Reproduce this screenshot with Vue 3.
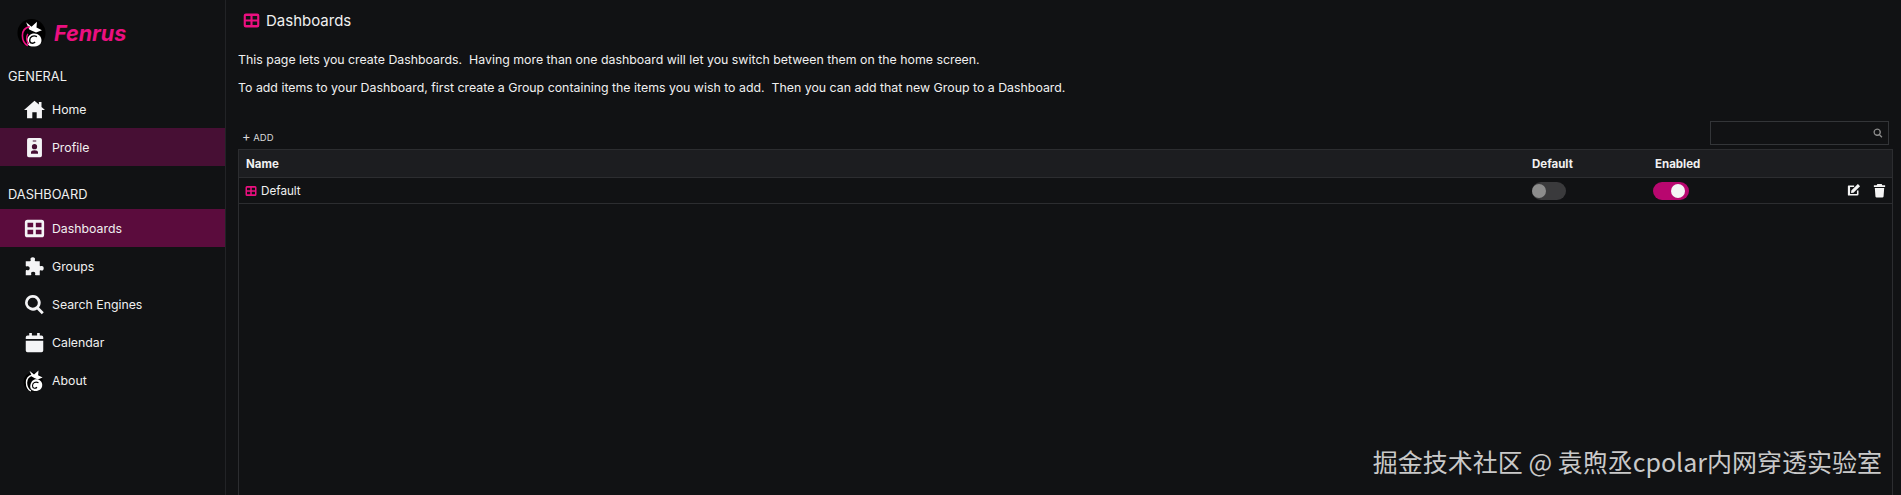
<script setup>
const general = [
  { label: 'Home', icon: 'home' },
  { label: 'Profile', icon: 'profile', state: 'hover' }
]
const dashboard = [
  { label: 'Dashboards', icon: 'grid', state: 'active' },
  { label: 'Groups', icon: 'puzzle' },
  { label: 'Search Engines', icon: 'search' },
  { label: 'Calendar', icon: 'calendar' },
  { label: 'About', icon: 'fox' }
]
const paths = {
  home: 'M12 2 0 12.500h3.500V22h6v-7h5v7h6v-9.500H24l-4-3.500V3.500h-3v2.800z',
  profile: 'M5.500 1h13a2 2 0 0 1 2 2v18a2 2 0 0 1-2 2h-13a2 2 0 0 1-2-2V3a2 2 0 0 1 2-2zM10 4v1h4V4zm2 4a3 3 0 1 0 0 6 3 3 0 0 0 0-6zm-4 11h8v-1.500c0-1.500-1.500-2.500-4-2.500s-4 1-4 2.500z',
  grid: 'M4 2h16a3 3 0 0 1 3 3v14a3 3 0 0 1-3 3H4a3 3 0 0 1-3-3V5a3 3 0 0 1 3-3zm0 3.500V10.500h6.500V5.500zm9.500 0V10.500H20V5.500zM4 13.500v5h6.500v-5zm9.500 0v5H20v-5z',
  puzzle: 'M10 1.500c2 0 3 1.200 2.500 2.800-.3.800-.3 1.700.7 1.700H18v4.800c0 1 .9 1 1.700.7 1.600-.5 2.800.5 2.800 2.500s-1.200 3-2.800 2.500c-.8-.3-1.700-.3-1.700.7V22h-4.500c-1 0-1-.9-.7-1.700.4-1.300-.6-2.300-2.300-2.300s-2.700 1-2.300 2.300c.3.800.3 1.700-.7 1.700H2v-5c0-1 .9-1 1.700-.7 1.400.4 2.800-.5 2.800-2.300s-1.400-2.700-2.800-2.300C2.900 12 2 12 2 11V6h4.800c1 0 1-.9.700-1.700C7 2.700 8 1.500 10 1.500z',
  search: 'M10 1a9 9 0 0 1 7.200 14.400l5.400 5.400-2.300 2.300-5.400-5.400A9 9 0 1 1 10 1zm0 3.200a5.800 5.800 0 1 0 0 11.600 5.800 5.800 0 0 0 0-11.600z',
  calendar: 'M6 1h3v3h6V1h3v3h2a2 2 0 0 1 2 2v2H2V6a2 2 0 0 1 2-2h2zM2 10h20v11a2 2 0 0 1-2 2H4a2 2 0 0 1-2-2z'
}
</script>

<template>
  <div class="page">
    <aside class="sidebar">
      <div class="brand">
        <svg class="brand-fox" viewBox="0 0 32 32">
          <circle cx="16" cy="16" r="15.500" fill="#000" />
          <path d="M10 4l6 5 6-5.500-.5 6.500 6 3-6.500 2.500-4.500-2-3-1.500z" fill="#fff" />
          <path d="M14 9C9 10 6 14 6 19s2 9 6 11" fill="none" stroke="#ec0f80" stroke-width="1.800" />
          <path d="M16 17c6-2 11 2 11 7s-4 7-9 7c-5 0-7-3-7-6s2-7 5-8z" fill="#fff" />
          <path d="M22 20c-4-2-8 0-8 4s4 4 6 2" fill="none" stroke="#000" stroke-width="1.500" />
          <path d="M12 17c-2 3-2 8 1 11" fill="none" stroke="#ec0f80" stroke-width="1.500" />
        </svg>
        <span class="brand-name">Fenrus</span>
      </div>

      <h2 class="section general">GENERAL</h2>
      <a v-for="item in general" :key="item.label" class="nav-item" :class="item.state">
        <span class="nav-icon"><svg viewBox="0 0 24 24"><path fill-rule="evenodd" :d="paths[item.icon]" /></svg></span>
        {{ item.label }}
      </a>

      <h2 class="section board">DASHBOARD</h2>
      <a v-for="item in dashboard" :key="item.label" class="nav-item" :class="item.state">
        <span class="nav-icon">
          <svg v-if="item.icon === 'fox'" class="about-fox" viewBox="0 0 32 32">
            <circle cx="15" cy="18" r="13" fill="#000" />
            <path d="M10 3l6 5 6-5.500-.5 6.500 6 3-6.500 2.500-4.500-2-3-1.500z" fill="#fff" />
            <path d="M14 9C9 10 6 14 6 19s2 9 6 11" fill="none" stroke="#fff" stroke-width="1.800" />
            <path d="M16 15c6-2 11 2 11 7s-4 8-9 8c-5 0-7-3-7-6s2-8 5-9z" fill="#fff" />
            <path d="M22 19c-4-2-8 0-8 4s4 4 6 2" fill="none" stroke="#000" stroke-width="1.500" />
          </svg>
          <svg v-else viewBox="0 0 24 24"><path fill-rule="evenodd" :d="paths[item.icon]" /></svg>
        </span>
        {{ item.label }}
      </a>
    </aside>

    <main class="main">
      <header class="title">
        <svg class="title-icon" viewBox="0 0 24 24"><path fill-rule="evenodd" :d="paths.grid" /></svg>
        <span>Dashboards</span>
      </header>
      <p class="intro first">This page lets you create Dashboards.&nbsp; Having more than one dashboard will let you switch between them on the home screen.</p>
      <p class="intro">To add items to your Dashboard, first create a Group containing the items you wish to add.&nbsp; Then you can add that new Group to a Dashboard.</p>

      <div class="toolbar">
        <button class="add"><span class="plus">+</span> ADD</button>
        <div class="search-box">
          <svg viewBox="0 0 24 24"><path fill-rule="evenodd" :d="paths.search" /></svg>
        </div>
      </div>

      <div class="table">
        <div class="row head">
          <div class="c-name">Name</div>
          <div class="c-default">Default</div>
          <div class="c-enabled">Enabled</div>
          <div class="c-actions"></div>
        </div>
        <div class="row body">
          <div class="c-name name-cell">
            <svg class="row-icon" viewBox="0 0 24 24"><path fill-rule="evenodd" :d="paths.grid" /></svg>
            Default
          </div>
          <div class="c-default"><span class="switch"><span class="knob"></span></span></div>
          <div class="c-enabled"><span class="switch on"><span class="knob"></span></span></div>
          <div class="c-actions">
            <svg viewBox="0 0 24 24"><path d="M4 4h9v2.500H6.500v11h11V12H20v6a2 2 0 0 1-2 2H4a1 1 0 0 1-1-1V5a1 1 0 0 1 1-1z" /><path d="M19 1.500 22.500 5 12 15.500l-4 .5.500-4z" /></svg>
            <svg viewBox="0 0 24 24"><path d="M8.500 1.500h7L16.500 3.500H21v3H3v-3h4.500zM4.500 8h15l-1 13.500a2 2 0 0 1-2 1.500h-9a2 2 0 0 1-2-1.500z" /></svg>
          </div>
        </div>
      </div>

      <div class="watermark">掘金技术社区 @ 袁煦丞cpolar内网穿透实验室</div>
    </main>
  </div>
</template>

<style>
html, body { margin: 0; background: #111214; }
</style>

<style scoped>
.page {
  display: flex;
  height: 495px;
  overflow: hidden;
  background: #111214;
  color: #f0f0f0;
  font-family: Inter, "Noto Sans", sans-serif;
  font-size: 12.300px;
}
.sidebar {
  width: 225px;
  flex: none;
  border-right: 1px solid #222326;
}
.brand {
  display: flex;
  align-items: center;
  gap: 8px;
  height: 32px;
  padding: 17px 0 0 17px;
}
.brand-fox { width: 29px; height: 30px; flex: none; }
.brand-name {
  color: #ec0f80;
  font-size: 21.500px;
  font-weight: 700;
  font-style: italic;
}
.section {
  margin: 0;
  padding-left: 8px;
  font-size: 12.800px;
  font-weight: 400;
  line-height: 16px;
}
.general { margin-top: 20px; }
.board { margin-top: 21px; margin-bottom: 6px; }
.general + .nav-item { margin-top: 5px; }
.nav-item {
  display: flex;
  align-items: center;
  height: 38px;
  padding-left: 24px;
  gap: 8px;
}
.nav-item.hover { background: #470f34; }
.nav-item.active { background: #5b0c3d; }
.nav-icon {
  width: 20px;
  height: 20px;
  display: flex;
  align-items: center;
  justify-content: center;
}
.nav-icon svg { width: 21px; height: 21px; flex: none; fill: #f4f4f6; }
.nav-icon .about-fox { width: 24px; height: 25px; }
.main {
  flex: 1;
  min-width: 0;
  padding: 0 8px 0 12px;
  position: relative;
}
.title {
  display: flex;
  align-items: center;
  gap: 6px;
  height: 40px;
  font-size: 15px;
  padding-left: 5px;
}
.title-icon { width: 17px; height: 17px; fill: #ec0f80; }
.intro { margin: 0; line-height: 16px; font-size: 12.350px; }
.first { margin-top: 12px; margin-bottom: 12px; }
.toolbar {
  display: flex;
  justify-content: space-between;
  align-items: flex-end;
  height: 29px;
  margin-top: 24px;
}
.add {
  background: none;
  border: 0;
  color: #d8d8d8;
  font: 9.500px Inter, sans-serif;
  padding: 0 0 5px 4px;
  line-height: 12px;
}
.plus { font-size: 13px; }
.search-box {
  width: 172px;
  height: 22px;
  margin: 0 4px 4px 0;
  border: 1px solid #333538;
  display: flex;
  align-items: center;
  justify-content: flex-end;
  padding-right: 5px;
}
.search-box svg { width: 10px; height: 10px; fill: #8a8a8a; }
.table {
  height: 345px;
  border: 1px solid #2c2d30;
  border-bottom: 0;
}
.row {
  display: grid;
  grid-template-columns: 1fr 123px 123px 114px;
  align-items: center;
  padding-left: 7px;
  border-bottom: 1px solid #2c2d30;
}
.head {
  height: 27px;
  background: #1c1d20;
  font-size: 11.500px;
  font-weight: 700;
}
.body { height: 25px; font-size: 11.700px; }
.name-cell { display: flex; align-items: center; gap: 4px; margin-left: -1px; }
.row-icon { width: 12px; height: 12px; fill: #ec0f80; }
.switch {
  display: block;
  position: relative;
  width: 34px;
  height: 18px;
  border-radius: 9px;
  background: #3a3a3c;
}
.switch.on { width: 36px; margin-left: -2px; background: #b8076f; }
.knob {
  position: absolute;
  left: 0;
  top: 2px;
  width: 14px;
  height: 14px;
  border-radius: 50%;
  background: #8c8c8c;
}
.on .knob { left: 18px; background: #f4f4f4; }
.c-actions {
  display: flex;
  justify-content: flex-end;
  gap: 11px;
  padding-right: 5px;
}
.c-actions svg { width: 15px; height: 15px; fill: #f4f4f4; }
.watermark {
  position: absolute;
  right: 19px;
  bottom: 17px;
  color: #c9c9c9;
  font-family: "Noto Sans CJK SC", sans-serif;
  font-size: 25px;
  line-height: 34px;
  white-space: nowrap;
}
</style>
